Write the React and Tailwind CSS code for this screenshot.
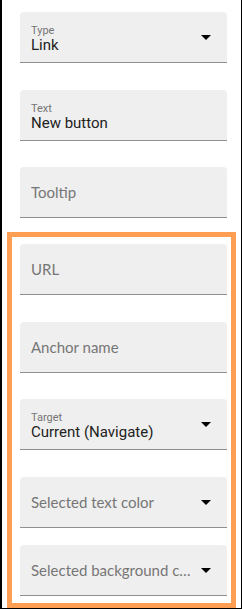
const Arrow = () => (
  <svg width="10" height="5" viewBox="0 0 10 5" className="shrink-0">
    <path d="M0 0h10L5 5z" fill="#000" />
  </svg>
);

const Field = ({ label, value, placeholder, select, className = "" }) => (
  <div
    className={`flex items-center w-[207px] h-[51px] shrink-0 rounded-t-[4px] bg-[#efefef] border-b border-[#8f8f8f] pl-[11px] pr-[16px] ${className}`}
  >
    <div className="flex-1 min-w-0">
      {label ? (
        <div className="flex flex-col font-['Roboto',sans-serif] pt-[3px]">
          <span className="text-[11px] leading-[13px] text-[#757575]">{label}</span>
          <span className="text-[15px] leading-[17px] text-[#222] truncate">{value}</span>
        </div>
      ) : (
        <div className="font-['Lato',sans-serif] text-[15px] leading-[20px] text-[#767676] truncate pr-[6px]">
          {placeholder}
        </div>
      )}
    </div>
    {select && <Arrow />}
  </div>
);

export default function App() {
  return (
    <div className="w-[242px] h-[609px] bg-white border-l-2 border-r border-b border-black flex flex-col pl-[18px] pt-[12px]">
      <Field label="Type" value="Link" select />
      <Field label="Text" value="New button" className="mt-[27px]" />
      <Field placeholder="Tooltip" className="mt-[26px]" />

      {/* highlighted link options */}
      <div className="ml-[-13px] mt-[14px] w-[229px] border-[5px] border-[#fd9e53] pl-[8px] pt-[7px] pb-[7px] flex flex-col">
        <Field placeholder="URL" />
        <Field placeholder="Anchor name" className="mt-[27px]" />
        <Field label="Target" value="Current (Navigate)" select className="mt-[26px]" />
        <Field placeholder="Selected text color" select className="mt-[27px]" />
        <Field placeholder="Selected background color" select className="mt-[17px]" />
      </div>
    </div>
  );
}
